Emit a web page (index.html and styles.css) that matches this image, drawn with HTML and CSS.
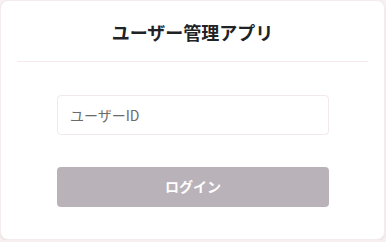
FILE: index.html
```html
<!DOCTYPE html>
<html lang="ja">
<head>
    <meta charset="UTF-8">
    <meta name="viewport" content="width=device-width, initial-scale=1.0">
    <title>ユーザー管理アプリ</title>
    <link rel="stylesheet" href="styles.css">
</head>
<body>

    <div class="card">
        <!-- Header with app title -->
        <div class="card-header">
            <h1 class="title">ユーザー管理アプリ</h1>
        </div>

        <!-- Login form -->
        <form class="login-form" onsubmit="return false;">
            <input type="text" class="input" placeholder="ユーザーID">
            <button type="submit" class="button" disabled>ログイン</button>
        </form>
    </div>

</body>
</html>
```

FILE: styles.css
```css
/* Page base */
body {
    margin: 0;
    background-color: #f8f1f1;
    font-family: "Noto Sans CJK JP", "Noto Sans", sans-serif;
}

/* Card container */
.card {
    box-sizing: border-box;
    width: 385px;
    height: 240px;
    background-color: #fff;
    border: 1px solid #f3ebec;
    border-radius: 8px;
    box-shadow: 0 1px 2px rgba(120, 90, 90, 0.12);
}

/* Header */
.card-header {
    margin: 0 16px;
    padding: 18px 0 16px;
    border-bottom: 1px solid #f6e9eb;
    text-align: center;
}

.title {
    margin: 0;
    font-size: 18px;
    line-height: 26px;
    font-weight: 700;
    color: #1f2326;
}

/* Form */
.login-form {
    display: flex;
    flex-direction: column;
    gap: 32px;
    padding: 33px 55px 0 56px;
}

.input {
    box-sizing: border-box;
    width: 272px;
    height: 40px;
    padding: 0 12px;
    border: 1px solid #f3e8ea;
    border-radius: 4px;
    font-family: inherit;
    font-size: 14px;
    color: #333;
    outline: none;
}

.input::placeholder {
    color: #6b6b6b;
}

.button {
    width: 272px;
    height: 40px;
    padding: 0 0 2px;
    border: none;
    border-radius: 4px;
    background-color: #bab2b9;
    color: #fff;
    font-family: inherit;
    font-size: 14px;
    font-weight: 700;
}
```
